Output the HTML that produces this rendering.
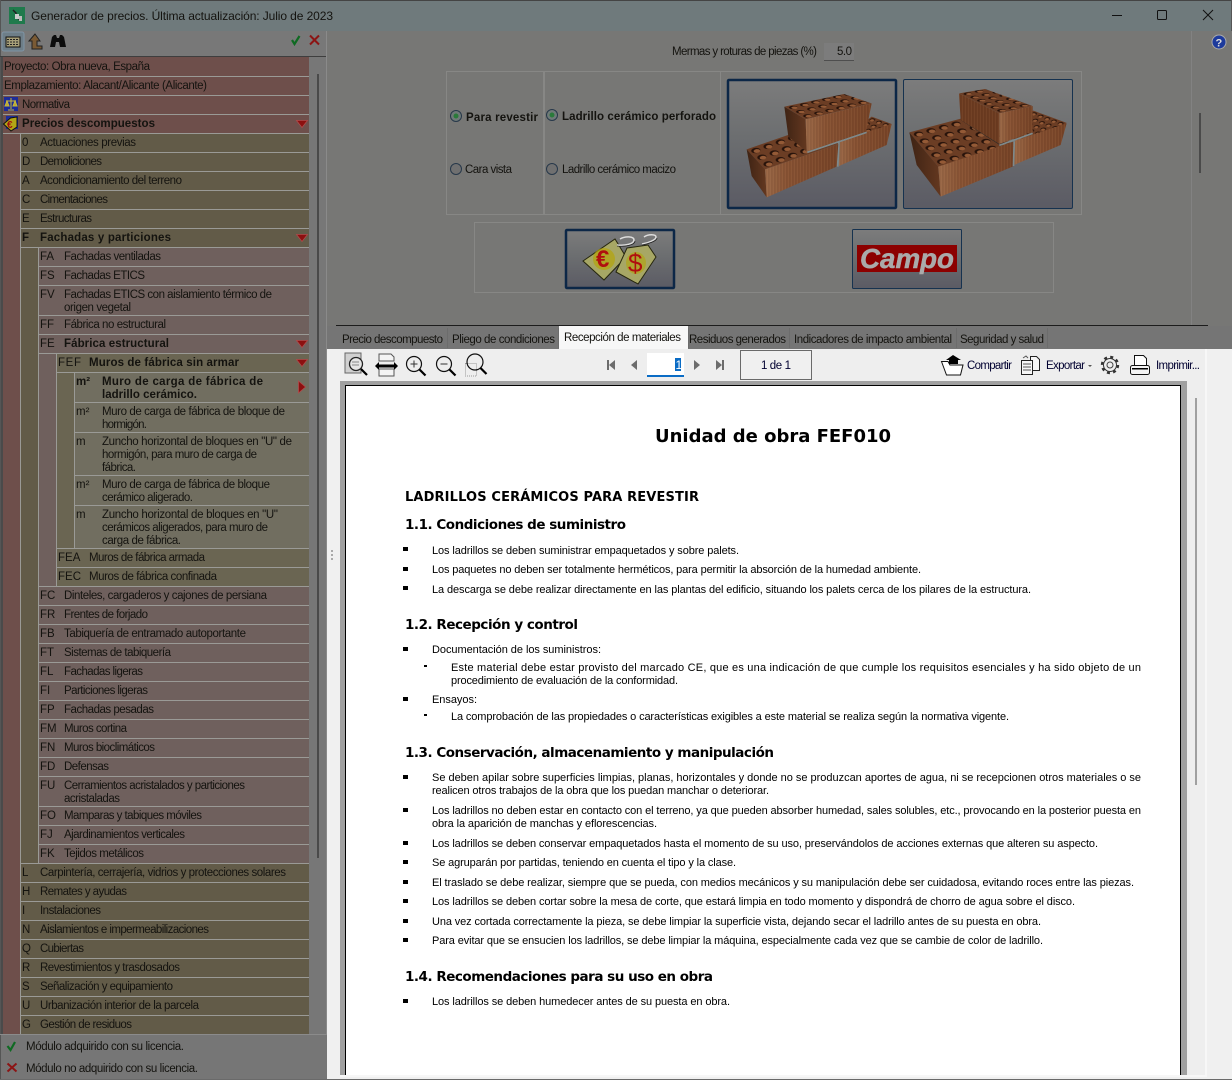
<!DOCTYPE html>
<html><head><meta charset="utf-8"><title>Generador de precios</title>
<style>
html,body{margin:0;padding:0;background:#757575;width:1232px;height:1080px;overflow:hidden}
svg{display:block}
text{font-family:"Liberation Sans",Arial,sans-serif;font-size:11.5px;fill:#14130f}
.b{font-weight:bold}
.d{font-size:11px;fill:#000}
.h{font-family:"DejaVu Sans",Verdana,sans-serif;font-weight:bold;font-size:13.5px;fill:#000}
.t{fill:#111a33}
.n{fill:#000030;font-size:11.5px}
</style></head><body>
<svg xmlns="http://www.w3.org/2000/svg" width="1232" height="1080" viewBox="0 0 1232 1080">
<defs>
<linearGradient id="g1" x1="0" y1="0" x2="0" y2="1"><stop offset="0" stop-color="#7c7c7c"/><stop offset=".45" stop-color="#6c6e70"/><stop offset="1" stop-color="#5b5b64"/></linearGradient>
<linearGradient id="w1" x1="0" y1="0" x2="1" y2="0"><stop offset="0" stop-color="#9a6948"/><stop offset=".3" stop-color="#875233"/><stop offset="1" stop-color="#754226"/></linearGradient>
<linearGradient id="w2" x1="0" y1="0" x2="1" y2="0"><stop offset="0" stop-color="#3e2314"/><stop offset="1" stop-color="#643820"/></linearGradient>
<pattern id="hp" width="1" height="1" patternUnits="userSpaceOnUse"><rect width="1" height="1" fill="#6b3d24"/><circle cx=".5" cy=".5" r=".34" fill="#26120a"/><circle cx=".54" cy=".6" r=".24" fill="#945a36"/></pattern>
<pattern id="st" width="9" height="9" patternUnits="userSpaceOnUse"><rect x="2" width="1.5" height="9" fill="#3a1c0c" opacity=".22"/><rect x="6" width="2" height="9" fill="#c08a60" opacity=".14"/></pattern>
<clipPath id="c1"><path d="M193 110L372 72L455 100L257 148Z"/></clipPath>
<clipPath id="c2"><path d="M717 70L795 57L938 108L838 130Z"/></clipPath>
</defs>

<!-- window -->
<rect width="1232" height="1080" fill="#767676"/>
<rect width="1232" height="1" fill="#444"/>
<rect y="1" width="1232" height="30" fill="#6f7a7c"/>
<rect y="0" width="1" height="1080" fill="#555"/><rect x="1231" width="1" height="1080" fill="#555"/>
<rect x="9" y="7" width="16" height="17" fill="#1f7a4c"/><path d="M13 10l3 3v4l4 3" fill="none" stroke="#222" stroke-width="1.5"/><rect x="15" y="14" width="4" height="5" fill="#ccc"/><rect x="19" y="16" width="3" height="5" fill="#bbb"/>
<text x="31" y="20" textLength="302" style="font-size:12px">Generador de precios. Última actualización: Julio de 2023</text>
<path d="M1112 15.5h10" stroke="#111" stroke-width="1"/><rect x="1157.5" y="10.5" width="9" height="9" rx="1" fill="none" stroke="#111"/><path d="M1203 10l10 10M1213 10l-10 10" stroke="#111" stroke-width="1"/>

<!-- left toolbar -->
<rect x="1" y="31" width="326" height="25" fill="#787878"/>
<rect x="2" y="32" width="22" height="19" rx="2" fill="#6e7e88" stroke="#7f95a6"/>
<rect x="6" y="37" width="14" height="10" fill="#a79f78" stroke="#111"/><path d="M7 39.5h12M7 42h12M7 44.5h12" stroke="#222" stroke-dasharray="2 1"/>
<path d="M35 34l-6 7h3v8h10v-3h-5v-5h3z" fill="#7a5a34" stroke="#222"/>
<path d="M50 47l2-10 2-2h2l1 3h2l1-3h2l2 2 2 10h-6l-1-5h-3l-1 5z" fill="#0c0c0c"/>
<path d="M292 40l2.5 4 5-8" fill="none" stroke="#0f6a22" stroke-width="2.2"/>
<path d="M310 35.500l9 9M319 35.500l-9 9" stroke="#8c1414" stroke-width="2"/>
<rect x="0" y="56" width="327" height="1" fill="#3e3e3e"/>

<!-- tree backgrounds -->
<rect x="3" y="57" width="306" height="977" fill="#6e4f4b"/>
<rect x="20" y="133" width="289" height="901" fill="#625b48"/>
<rect x="38" y="247" width="271" height="616" fill="#6f605d"/>
<rect x="56" y="353" width="253" height="233" fill="#6a6552"/>
<rect x="74" y="372" width="235" height="176" fill="#716e60"/>
<rect x="1" y="57" width="2" height="977" fill="#4a4a4a"/>
<g shape-rendering="crispEdges" stroke="#9a9a96" fill="none">
<path d="M3 76.500H309M3 95.500H309M3 114.500H309M3 133.500H309"/>
<path d="M20 152.500H309M20 171.500H309M20 190.500H309M20 209.500H309M20 228.500H309M20 247.500H309M20 863.500H309M20 882.500H309M20 901.500H309M20 920.500H309M20 939.500H309M20 958.500H309M20 977.500H309M20 996.500H309M20 1015.500H309"/>
<path d="M38 266.500H309M38 285.500H309M38 315.500H309M38 334.500H309M38 353.500H309M38 586.500H309M38 605.500H309M38 624.500H309M38 643.500H309M38 662.500H309M38 681.500H309M38 700.500H309M38 719.500H309M38 738.500H309M38 757.500H309M38 776.500H309M38 806.500H309M38 825.500H309M38 844.500H309"/>
<path d="M56 372.500H309M56 548.500H309M56 567.500H309"/>
<path d="M74 402.500H309M74 432.500H309M74 475.500H309M74 505.500H309"/>
<path d="M20.500 133V1034M38.500 247V863M56.500 353V586M74.500 372V548"/>
</g>

<!-- tree scrollbar -->
<rect x="309" y="57" width="17" height="977" fill="#777"/>
<rect x="317" y="74" width="2" height="784" fill="#4a4a4a"/>
<rect x="326" y="31" width="1" height="1003" fill="#8a8a8a"/>

<!-- tree icons -->
<rect x="4" y="97" width="14" height="14" fill="#1c2c9a"/><path d="M11 98v11M6 101h10M7 101l-2 5h4zM15 101l-2 5h4zM8 110h6" fill="#b8a838" stroke="#c9b83a"/>
<rect x="6" y="116" width="12" height="13" fill="#1c2c9a"/>
<path d="M3.500 124l7-6 6.500-1v10l-6 4z" fill="#b3a616" stroke="#111"/><text x="7" y="128" class="b" style="font-size:10px;fill:#a01010">€</text>
<g fill="#8c1010" stroke="#b04a4a" stroke-width=".8">
<path d="M296.500 120.500h11l-5.500 7z"/><path d="M296.500 234.500h11l-5.500 7z"/><path d="M296.500 340.500h11l-5.500 7z"/><path d="M296.500 359.500h11l-5.500 7z"/><path d="M298.500 381v12l7-6z"/>
</g>

<!-- tree text -->
<text x="4" y="70" textLength="146">Proyecto: Obra nueva, España</text>
<text x="4" y="89" textLength="203">Emplazamiento: Alacant/Alicante (Alicante)</text>
<text x="22" y="108" textLength="48">Normativa</text>
<text x="22" y="127" class="b" textLength="133">Precios descompuestos</text>
<text x="22" y="146">0</text><text x="40" y="146" textLength="96">Actuaciones previas</text>
<text x="22" y="165">D</text><text x="40" y="165" textLength="62">Demoliciones</text>
<text x="22" y="184">A</text><text x="40" y="184" textLength="142">Acondicionamiento del terreno</text>
<text x="22" y="203">C</text><text x="40" y="203" textLength="68">Cimentaciones</text>
<text x="22" y="222">E</text><text x="40" y="222" textLength="52">Estructuras</text>
<text x="22" y="241" class="b">F</text><text x="40" y="241" class="b" textLength="131">Fachadas y particiones</text>
<text x="40" y="260">FA</text><text x="64" y="260" textLength="97">Fachadas ventiladas</text>
<text x="40" y="279">FS</text><text x="64" y="279" textLength="81">Fachadas ETICS</text>
<text x="40" y="298">FV</text><text x="64" y="298" textLength="208">Fachadas ETICS con aislamiento térmico de</text><text x="64" y="311" textLength="67">origen vegetal</text>
<text x="40" y="328">FF</text><text x="64" y="328" textLength="102">Fábrica no estructural</text>
<text x="40" y="347" style="font-weight:500">FE</text><text x="64" y="347" class="b" textLength="105">Fábrica estructural</text>
<text x="58" y="366" textLength="23">FEF</text><text x="89" y="366" class="b" textLength="150">Muros de fábrica sin armar</text>
<text x="76" y="385" class="b">m²</text><text x="102" y="385" class="b" textLength="161">Muro de carga de fábrica de</text><text x="102" y="398" class="b" textLength="95">ladrillo cerámico.</text>
<text x="76" y="415">m²</text><text x="102" y="415" textLength="183">Muro de carga de fábrica de bloque de</text><text x="102" y="428" textLength="45">hormigón.</text>
<text x="76" y="445">m</text><text x="102" y="445" textLength="190">Zuncho horizontal de bloques en "U" de</text><text x="102" y="458" textLength="155">hormigón, para muro de carga de</text><text x="102" y="471" textLength="34">fábrica.</text>
<text x="76" y="488">m²</text><text x="102" y="488" textLength="168">Muro de carga de fábrica de bloque</text><text x="102" y="501" textLength="91">cerámico aligerado.</text>
<text x="76" y="518">m</text><text x="102" y="518" textLength="176">Zuncho horizontal de bloques en "U"</text><text x="102" y="531" textLength="166">cerámicos aligerados, para muro de</text><text x="102" y="544" textLength="79">carga de fábrica.</text>
<text x="58" y="561">FEA</text><text x="89" y="561" textLength="116">Muros de fábrica armada</text>
<text x="58" y="580">FEC</text><text x="89" y="580" textLength="128">Muros de fábrica confinada</text>
<text x="40" y="599">FC</text><text x="64" y="599" textLength="203">Dinteles, cargaderos y cajones de persiana</text>
<text x="40" y="618">FR</text><text x="64" y="618" textLength="84">Frentes de forjado</text>
<text x="40" y="637">FB</text><text x="64" y="637" textLength="182">Tabiquería de entramado autoportante</text>
<text x="40" y="656">FT</text><text x="64" y="656" textLength="107">Sistemas de tabiquería</text>
<text x="40" y="675">FL</text><text x="64" y="675" textLength="79">Fachadas ligeras</text>
<text x="40" y="694">FI</text><text x="64" y="694" textLength="84">Particiones ligeras</text>
<text x="40" y="713">FP</text><text x="64" y="713" textLength="90">Fachadas pesadas</text>
<text x="40" y="732">FM</text><text x="64" y="732" textLength="63">Muros cortina</text>
<text x="40" y="751">FN</text><text x="64" y="751" textLength="91">Muros bioclimáticos</text>
<text x="40" y="770">FD</text><text x="64" y="770" textLength="45">Defensas</text>
<text x="40" y="789">FU</text><text x="64" y="789" textLength="181">Cerramientos acristalados y particiones</text><text x="64" y="802" textLength="56">acristaladas</text>
<text x="40" y="819">FO</text><text x="64" y="819" textLength="138">Mamparas y tabiques móviles</text>
<text x="40" y="838">FJ</text><text x="64" y="838" textLength="121">Ajardinamientos verticales</text>
<text x="40" y="857">FK</text><text x="64" y="857" textLength="80">Tejidos metálicos</text>
<text x="22" y="876">L</text><text x="40" y="876" textLength="246">Carpintería, cerrajería, vidrios y protecciones solares</text>
<text x="22" y="895">H</text><text x="40" y="895" textLength="87">Remates y ayudas</text>
<text x="22" y="914">I</text><text x="40" y="914" textLength="61">Instalaciones</text>
<text x="22" y="933">N</text><text x="40" y="933" textLength="169">Aislamientos e impermeabilizaciones</text>
<text x="22" y="952">Q</text><text x="40" y="952" textLength="44">Cubiertas</text>
<text x="22" y="971">R</text><text x="40" y="971" textLength="140">Revestimientos y trasdosados</text>
<text x="22" y="990">S</text><text x="40" y="990" textLength="133">Señalización y equipamiento</text>
<text x="22" y="1009">U</text><text x="40" y="1009" textLength="159">Urbanización interior de la parcela</text>
<text x="22" y="1028">G</text><text x="40" y="1028" textLength="92">Gestión de residuos</text>

<!-- legend -->
<rect x="1" y="1034" width="326" height="46" fill="#767676"/>
<rect x="0" y="1034" width="327" height="1" fill="#8b8b8b"/>
<path d="M7.500 1046l3 4 4.500-8" fill="none" stroke="#0f6a22" stroke-width="2.200"/>
<path d="M7.500 1063.500l9 8M16.500 1063.500l-9 8" stroke="#8c1414" stroke-width="2"/>
<text x="26" y="1050" textLength="158">Módulo adquirido con su licencia.</text>
<text x="26" y="1072" textLength="172">Módulo no adquirido con su licencia.</text>

<!-- upper panel -->
<rect x="327" y="31" width="905" height="295" fill="#777775"/>
<rect x="1191" y="31" width="1" height="295" fill="#828282"/>
<rect x="1199" y="113" width="2" height="60" fill="#4a4a4a"/>
<circle cx="1219" cy="42" r="7" fill="#1d3a9c" stroke="#aaa"/><text x="1215.500" y="46.500" class="b" style="font-size:11px;fill:#ddd">?</text>
<text x="672" y="55" textLength="145">Mermas y roturas de piezas (%)</text>
<rect x="824" y="43" width="30" height="17" fill="#7c7c7c"/><rect x="824" y="60" width="30" height="1" fill="#4e4e4e"/>
<text x="837" y="55" textLength="15">5.0</text>

<g fill="none" stroke="#878785" shape-rendering="crispEdges">
<rect x="446.500" y="71.500" width="635" height="143"/><path d="M543.500 71v143M544.500 71v143M720.500 71v143"/>
<rect x="474.500" y="222.500" width="579" height="70"/>
</g>
<circle cx="456" cy="116" r="5.500" fill="#6f7a78" stroke="#27384a"/><circle cx="456" cy="116" r="2.500" fill="#2a7a3a"/>
<circle cx="552" cy="115" r="5.500" fill="#6f7a78" stroke="#27384a"/><circle cx="552" cy="115" r="2.500" fill="#2a7a3a"/>
<circle cx="456" cy="169" r="5.500" fill="#707070" stroke="#27384a"/><circle cx="552" cy="169" r="5.500" fill="#707070" stroke="#27384a"/>
<text x="466" y="121" class="b" textLength="72">Para revestir</text>
<text x="562" y="120" class="b" textLength="154">Ladrillo cerámico perforado</text>
<text x="465" y="173" textLength="47">Cara vista</text>
<text x="562" y="173" textLength="114">Ladrillo cerámico macizo</text>

<!-- brick 1 -->
<rect x="728" y="80" width="168" height="128" rx="1" fill="url(#g1)" stroke="#0c2747" stroke-width="2.500"/>
<g transform="translate(720 70) scale(.33333)">
<g transform="matrix(20 7.300 -16 12 455 140)"><rect width="3" height="6" fill="url(#hp)"/></g>
<path d="M360 212L515 162L500 225L357 288Z" fill="url(#w1)"/><path d="M360 212L515 162L500 225L357 288Z" fill="url(#st)"/>
<path d="M356 215L353 290" stroke="#7e8a8c" stroke-width="6"/>
<g transform="matrix(36.700 -12.700 18.300 20 80 238)"><rect width="6" height="3" fill="url(#hp)"/></g>
<path d="M95 318L80 238L135 298L140 382Z" fill="url(#w2)"/>
<path d="M135 298L355 222L350 290L140 382Z" fill="url(#w1)"/><path d="M135 298L355 222L350 290L140 382Z" fill="url(#st)"/>
<path d="M262 247L440 187" stroke="#7e8a8c" stroke-width="5"/>
<g clip-path="url(#c1)"><g transform="matrix(33 -8 21.300 12.700 193 110)"><rect width="6" height="3" fill="url(#hp)"/></g></g>
<path d="M205 200L193 110L257 148L260 245Z" fill="url(#w2)"/>
<path d="M257 148L455 100L438 185L260 245Z" fill="url(#w1)"/><path d="M257 148L455 100L438 185L260 245Z" fill="url(#st)"/>
</g>
<!-- brick 2 -->
<rect x="903.500" y="79.500" width="169" height="129" rx="1.500" fill="url(#g1)" stroke="#16324f" stroke-width="1"/>
<g transform="translate(720 70) scale(.33333)">
<g transform="matrix(20 7.300 -16 12 940 122)"><rect width="5" height="6" fill="url(#hp)"/></g>
<path d="M885 212L1040 160L1022 225L882 285Z" fill="url(#w1)"/><path d="M885 212L1040 160L1022 225L882 285Z" fill="url(#st)"/>
<path d="M882 214L880 288" stroke="#7e8a8c" stroke-width="6"/>
<g transform="matrix(37.500 -10 17.400 20.600 568 187)"><rect width="6" height="5" fill="url(#hp)"/></g>
<path d="M590 285L568 187L655 290L662 380Z" fill="url(#w2)"/>
<path d="M655 290L880 215L878 290L662 380Z" fill="url(#w1)"/><path d="M655 290L880 215L878 290L662 380Z" fill="url(#st)"/>
<path d="M838 226L938 190" stroke="#7e8a8c" stroke-width="5"/>
<path d="M725 150L838 222" stroke="#2a2a2a" stroke-width="4"/>
<g clip-path="url(#c2)"><g transform="matrix(33.300 -7.300 20.200 10 717 70)"><rect width="3" height="6" fill="url(#hp)"/></g></g>
<path d="M722 150L717 70L838 130L838 222Z" fill="#6b3b20"/><path d="M722 150L717 70L838 130L838 222Z" fill="url(#st)"/>
<path d="M838 130L938 108L938 185L838 222Z" fill="url(#w1)"/><path d="M838 130L938 108L938 185L838 222Z" fill="url(#st)"/>
</g>

<!-- price tags -->
<rect x="566" y="230" width="108" height="58" rx="1" fill="url(#g1)" stroke="#0c2747" stroke-width="2.500"/>
<path d="M583 261L615 239L626 257L604 280Z" fill="#a7a765" stroke="#26260e"/>
<path d="M616 272L627 248L648 245L656 257L638 284Z" fill="#a7a765" stroke="#26260e"/>
<ellipse cx="604" cy="259" rx="11" ry="11" fill="#b3a40a" opacity=".7"/><ellipse cx="636" cy="263" rx="10" ry="11" fill="#b3a40a" opacity=".6"/>
<text x="596" y="267" class="b" style="font-size:24px;fill:#b00f0f">€</text>
<text x="628" y="272" style="font-size:26px;fill:#b00f0f">$</text>
<path d="M617 245c8 1 17-1 17-5s-9-4-14-1M642 244c6-1 14-4 14-7s-8-3-12 0" fill="none" stroke="#ddd" stroke-width="1.500"/>
<path d="M617 246c8 1 18-1 18-5M642 245c6-1 15-4 15-7" fill="none" stroke="#222" stroke-width=".8"/>
<!-- campo -->
<rect x="852.500" y="229.500" width="109" height="59" rx="1" fill="url(#g1)" stroke="#16324f"/>
<rect x="857" y="245" width="100" height="27" fill="#8c0000"/>
<text x="860" y="268" class="b" textLength="94" lengthAdjust="spacingAndGlyphs" style="font-size:28px;font-style:italic;fill:#aaa;stroke:#aaa;stroke-width:.5">Campo</text>

<!-- tabs -->
<rect x="327" y="326" width="905" height="23" fill="#757575"/>
<rect x="336" y="325" width="872" height="1" fill="#1c1c1c"/>
<path d="M447.500 328v20M558.500 328v20M688.500 328v20M789.500 328v20M956.500 328v20M1047.500 328v20" stroke="#6c6c6c" shape-rendering="crispEdges"/>
<rect x="559" y="326" width="129" height="23" fill="#f7f7f7"/>
<text x="342" y="343" textLength="101">Precio descompuesto</text>
<text x="452" y="343" textLength="103">Pliego de condiciones</text>
<text x="564" y="341" textLength="117">Recepción de materiales</text>
<text x="689" y="343" textLength="97">Residuos generados</text>
<text x="794" y="343" textLength="158">Indicadores de impacto ambiental</text>
<text x="960" y="343" textLength="84">Seguridad y salud</text>

<!-- report viewer -->
<rect x="327" y="349" width="905" height="731" fill="#f0f0f0"/>
<rect x="340" y="349" width="865" height="32" fill="#eeeeee"/>
<rect x="1187" y="381" width="18" height="696" fill="#eeeeee"/>
<rect x="1205" y="349" width="2" height="728" fill="#f7f7f7"/>
<rect x="340" y="381" width="847" height="694" fill="#a0a0a0"/>
<rect x="345" y="385" width="836" height="690" fill="#fff"/>
<path d="M345.500 1075V385.500H1180.500V1075" fill="none" stroke="#000" shape-rendering="crispEdges"/>
<rect x="340" y="1075" width="867" height="2" fill="#f7f7f7"/>
<rect x="1195" y="398" width="2" height="387" fill="#a0a0a0"/>
<rect x="0" y="1079" width="1232" height="1" fill="#6a6a6a"/>
<rect x="331" y="550" width="2" height="2" fill="#aaa"/><rect x="331" y="554" width="2" height="2" fill="#aaa"/><rect x="331" y="558" width="2" height="2" fill="#aaa"/>

<!-- viewer toolbar -->
<rect x="345" y="353" width="16" height="20" fill="#d0d0d0" stroke="#666"/><circle cx="356" cy="364" r="6.500" fill="#e6e6e6" stroke="#222" stroke-width="1.300"/><path d="M361 369l6 6" stroke="#000" stroke-width="2.200"/><path d="M352 362h7M352 365h7" stroke="#888"/>
<path d="M379 354h12l3 3v4h-15zM379 369h15v7h-15z" fill="#f4f4f4" stroke="#555"/><path d="M375 366l4-4v2.500h15v-2.500l4 4-4 4v-2.500h-15v2.500z" fill="#000"/>
<circle cx="414" cy="364" r="7.500" fill="none" stroke="#111" stroke-width="1.200"/><path d="M419.500 369.500l6 6" stroke="#000" stroke-width="2.200"/><path d="M410.500 364h7M414 360.500v7" stroke="#333"/>
<circle cx="444" cy="364" r="7.500" fill="none" stroke="#111" stroke-width="1.200"/><path d="M449.500 369.500l6 6" stroke="#000" stroke-width="2.200"/><path d="M440.500 364h7" stroke="#333"/>
<rect x="465.500" y="363.500" width="11" height="12.500" fill="none" stroke="#999" stroke-dasharray="1 1"/>
<circle cx="475" cy="362" r="8" fill="none" stroke="#111" stroke-width="1.200"/><path d="M480.500 368l6 6" stroke="#000" stroke-width="2.200"/>
<g fill="#6c6c6c"><rect x="607" y="360" width="2" height="10"/><path d="M615 360v10l-6-5zM637 360v10l-6-5zM694 360v10l6-5zM716 360v10l6-5z"/><rect x="722" y="360" width="2" height="10"/></g>
<rect x="647" y="353" width="37" height="23" fill="#fff"/><rect x="647" y="375" width="37" height="2" fill="#0a6cc5"/>
<rect x="675" y="358" width="6" height="13" fill="#0a6cc5"/><text x="675.500" y="369" style="font-size:12px;fill:#fff">1</text>
<rect x="740.500" y="350.500" width="71" height="29" fill="#f0f0f0" stroke="#6a6a6a" shape-rendering="crispEdges"/>
<text x="761" y="369" class="n" textLength="30">1 de 1</text>
<path d="M941.500 361.500l5 13.500h14l2.500-10h-13l-2-3.500z" fill="#fff" stroke="#111"/><path d="M949 364v-4h-3l7-5 8 5h-3v4z" fill="#000"/>
<text x="967" y="369" class="n" textLength="45">Compartir</text>
<path d="M1030.500 356.500h6l3 3v11h-9z" fill="#f6f6f6" stroke="#222"/><rect x="1021.500" y="360.500" width="11" height="14" fill="#f6f6f6" stroke="#222"/><path d="M1023 364h8M1023 367h8M1023 370h8M1023 358l3-2 2 2" fill="none" stroke="#555"/>
<text x="1046" y="369" class="n" textLength="39">Exportar</text><path d="M1088 365h4l-2 2z" fill="#555"/>
<circle cx="1110" cy="365" r="8" fill="none" stroke="#333" stroke-width="2.400" stroke-dasharray="3 3.280"/><circle cx="1110" cy="365" r="6.500" fill="#eee" stroke="#333"/><circle cx="1110" cy="365" r="3" fill="none" stroke="#444"/>
<path d="M1134.500 355.500h9l3 3v7h-12z" fill="#fff" stroke="#111"/><rect x="1130.500" y="365.500" width="19" height="9" rx="2" fill="#f4f4f4" stroke="#111"/><rect x="1132" y="368" width="16" height="1.500" fill="#000"/>
<text x="1156" y="369" class="n" textLength="44">Imprimir...</text>

<!-- document -->
<text x="655" y="442" class="h" style="font-size:18px" textLength="236">Unidad de obra FEF010</text>
<text x="405" y="501" class="h" style="font-size:13px" textLength="294">LADRILLOS  CERÁMICOS  PARA  REVESTIR</text>
<text x="405" y="529" class="h" textLength="221">1.1. Condiciones de suministro</text>
<text x="432" y="554" class="d" textLength="307">Los ladrillos se deben suministrar empaquetados y sobre palets.</text>
<text x="432" y="573" class="d" textLength="489">Los paquetes no deben ser totalmente herméticos, para permitir la absorción de la humedad ambiente.</text>
<text x="432" y="593" class="d" textLength="599">La descarga se debe realizar directamente en las plantas del edificio, situando los palets cerca de los pilares de la estructura.</text>
<text x="405" y="629" class="h" textLength="173">1.2. Recepción y control</text>
<text x="432" y="653" class="d" textLength="169">Documentación de los suministros:</text>
<text x="451" y="671" class="d" textLength="690">Este material debe estar provisto del marcado CE, que es una indicación de que cumple los requisitos esenciales y ha sido objeto de un</text>
<text x="451" y="684" class="d" textLength="227">procedimiento de evaluación de la conformidad.</text>
<text x="432" y="703" class="d" textLength="45">Ensayos:</text>
<text x="451" y="720" class="d" textLength="558">La comprobación de las propiedades o características exigibles a este material se realiza según la normativa vigente.</text>
<text x="405" y="757" class="h" textLength="369">1.3. Conservación, almacenamiento y manipulación</text>
<text x="432" y="781" class="d" textLength="709">Se deben apilar sobre superficies limpias, planas, horizontales y donde no se produzcan aportes de agua, ni se recepcionen otros materiales o se</text>
<text x="432" y="794" class="d" textLength="337">realicen otros trabajos de la obra que los puedan manchar o deteriorar.</text>
<text x="432" y="814" class="d" textLength="709">Los ladrillos no deben estar en contacto con el terreno, ya que pueden absorber humedad, sales solubles, etc., provocando en la posterior puesta en</text>
<text x="432" y="827" class="d" textLength="225">obra la aparición de manchas y eflorescencias.</text>
<text x="432" y="847" class="d" textLength="666">Los ladrillos se deben conservar empaquetados hasta el momento de su uso, preservándolos de acciones externas que alteren su aspecto.</text>
<text x="432" y="866" class="d" textLength="304">Se agruparán por partidas, teniendo en cuenta el tipo y la clase.</text>
<text x="432" y="886" class="d" textLength="702">El traslado se debe realizar, siempre que se pueda, con medios mecánicos y su manipulación debe ser cuidadosa, evitando roces entre las piezas.</text>
<text x="432" y="905" class="d" textLength="643">Los ladrillos se deben cortar sobre la mesa de corte, que estará limpia en todo momento y dispondrá de chorro de agua sobre el disco.</text>
<text x="432" y="925" class="d" textLength="609">Una vez cortada correctamente la pieza, se debe limpiar la superficie vista, dejando secar el ladrillo antes de su puesta en obra.</text>
<text x="432" y="944" class="d" textLength="611">Para evitar que se ensucien los ladrillos, se debe limpiar la máquina, especialmente cada vez que se cambie de color de ladrillo.</text>
<text x="405" y="981" class="h" textLength="308">1.4. Recomendaciones para su uso en obra</text>
<text x="432" y="1005" class="d" textLength="298">Los ladrillos se deben humedecer antes de su puesta en obra.</text>
<g fill="#000" shape-rendering="crispEdges">
<rect x="403" y="547" width="5" height="4"/><rect x="403" y="567" width="5" height="4"/><rect x="403" y="586" width="5" height="4"/>
<rect x="403" y="647" width="5" height="4"/><rect x="403" y="697" width="5" height="4"/>
<rect x="424" y="665" width="3" height="2"/><rect x="424" y="714" width="3" height="2"/>
<rect x="403" y="775" width="5" height="4"/><rect x="403" y="808" width="5" height="4"/><rect x="403" y="841" width="5" height="4"/><rect x="403" y="860" width="5" height="4"/><rect x="403" y="880" width="5" height="4"/><rect x="403" y="899" width="5" height="4"/><rect x="403" y="919" width="5" height="4"/><rect x="403" y="938" width="5" height="4"/>
<rect x="403" y="999" width="5" height="4"/>
</g>
</svg>
</body></html>
